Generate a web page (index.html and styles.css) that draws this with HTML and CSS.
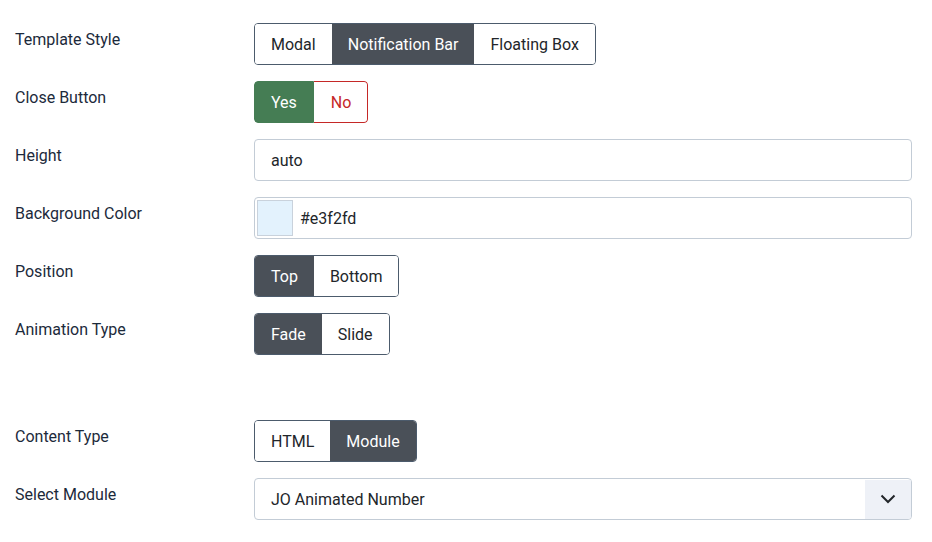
FILE: index.html
```html
<!DOCTYPE html>
<html lang="en">
<head>
  <meta charset="UTF-8">
  <title>Notification Bar Options</title>
  <link rel="stylesheet" href="styles.css">
</head>
<body>
  <form class="options">
    <div class="form-row">
      <label class="control-label">Template Style</label>
      <div class="btn-group">
        <span class="btn">Modal</span>
        <span class="btn active">Notification Bar</span>
        <span class="btn">Floating Box</span>
      </div>
    </div>
    <div class="form-row">
      <label class="control-label">Close Button</label>
      <div class="switcher">
        <span class="btn yes">Yes</span>
        <span class="btn no">No</span>
      </div>
    </div>
    <div class="form-row">
      <label class="control-label">Height</label>
      <div class="form-control">auto</div>
    </div>
    <div class="form-row">
      <label class="control-label">Background Color</label>
      <div class="form-control color-field">
        <span class="swatch" style="background:#e3f2fd"></span>
        <span>#e3f2fd</span>
      </div>
    </div>
    <div class="form-row">
      <label class="control-label">Position</label>
      <div class="btn-group">
        <span class="btn active">Top</span>
        <span class="btn">Bottom</span>
      </div>
    </div>
    <div class="form-row">
      <label class="control-label">Animation Type</label>
      <div class="btn-group">
        <span class="btn active">Fade</span>
        <span class="btn">Slide</span>
      </div>
    </div>
    <div class="form-row section-start">
      <label class="control-label">Content Type</label>
      <div class="btn-group">
        <span class="btn">HTML</span>
        <span class="btn active">Module</span>
      </div>
    </div>
    <div class="form-row">
      <label class="control-label">Select Module</label>
      <div class="form-control select-field">
        <span class="select-value">JO Animated Number</span>
        <span class="select-arrow">
          <svg width="16" height="10" viewBox="0 0 16 10"><path d="M1.5 1.5 8 8l6.5-6.5" fill="none" stroke="#22262a" stroke-width="2"/></svg>
        </span>
      </div>
    </div>
  </form>
</body>
</html>
```

FILE: styles.css
```css
body {
  margin: 0;
  padding: 23px 20px 0 15px;
  font-family: Roboto, "Liberation Sans", sans-serif;
  font-size: 16px;
  line-height: 24px;
  color: #22262a;
  background: #fff;
}
.form-row {
  display: grid;
  grid-template-columns: 239px 1fr;
  align-items: start;
  margin-bottom: 16px;
}
.section-start {
  margin-top: 65px;
}
.control-label {
  padding-top: 5px;
  color: #1c2a3b;
}
.btn-group, .switcher {
  display: inline-flex;
  justify-self: start;
  height: 42px;
  box-sizing: border-box;
  border: 1px solid #4c5b6c;
  border-radius: 4px;
  overflow: hidden;
}
.btn {
  display: flex;
  align-items: center;
  padding: 1px 16px 0;
  color: #22262a;
  background: #fff;
}
.btn.active {
  background: #4a5058;
  color: #fff;
}
.btn-group .btn.wide {
  padding: 1px 17px 0;
}
.switcher {
  border: none;
}
.switcher .yes {
  background: #457d54;
  color: #fff;
  border: 1px solid #457d54;
  border-radius: 4px 0 0 4px;
}
.switcher .no {
  color: #c52827;
  border: 1px solid #c52827;
  border-left: none;
  border-radius: 0 4px 4px 0;
  padding: 1px 16px 0 17px;
}
.form-control {
  height: 42px;
  box-sizing: border-box;
  border: 1px solid #c3ccd6;
  border-radius: 4px;
  padding: 1px 16px 0;
  display: flex;
  align-items: center;
}
.color-field {
  padding-left: 2px;
  gap: 7px;
}
.swatch {
  width: 36px;
  height: 36px;
  margin-top: -1px;
  box-sizing: border-box;
  border: 1px solid #c9d2dc;
}
.select-field {
  padding: 1px 0 0 16px;
  overflow: hidden;
}
.select-value {
  flex: 1;
}
.select-arrow {
  width: 46px;
  height: 100%;
  margin-top: -1px;
  background: #eef1f7;
  display: flex;
  align-items: center;
  justify-content: center;
}
```
